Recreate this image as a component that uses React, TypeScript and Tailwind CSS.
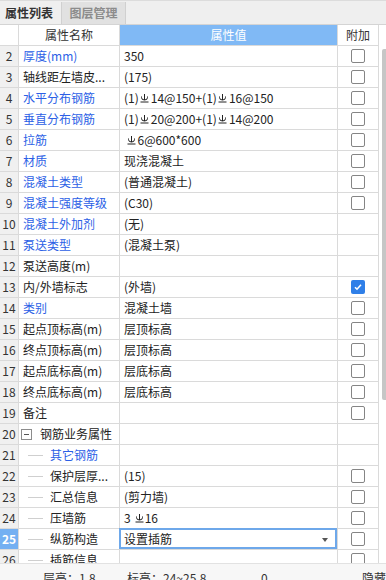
import React from "react";

type Row = {
  n: number;
  name: string;
  blue?: boolean;
  value?: React.ReactNode;
  cb?: "off" | "on";
  tree?: "group" | "child";
  selected?: boolean;
};

// HRB400 rebar grade symbol
function R({ className = "mx-[1.5px]" }: { className?: string }) {
  return (
    <svg
      width="9"
      height="9"
      viewBox="0 0 9 9"
      className={"inline-block align-[1px] " + className}
      fill="none"
      stroke="currentColor"
      strokeWidth="1"
    >
      <path d="M4.5 0V6" />
      <path d="M1.5 2.5v1a3 2.5 0 0 0 6 0v-1" />
      <path d="M0.5 8h8" />
    </svg>
  );
}

const rows: Row[] = [
  { n: 2, name: "厚度(mm)", blue: true, value: "350", cb: "off" },
  { n: 3, name: "轴线距左墙皮...", value: "(175)", cb: "off" },
  {
    n: 4,
    name: "水平分布钢筋",
    blue: true,
    value: (
      <>
        (1)<R />14@150+(1)<R />16@150
      </>
    ),
    cb: "off",
  },
  {
    n: 5,
    name: "垂直分布钢筋",
    blue: true,
    value: (
      <>
        (1)<R />20@200+(1)<R />14@200
      </>
    ),
    cb: "off",
  },
  {
    n: 6,
    name: "拉筋",
    blue: true,
    value: (
      <>
        <R className="ml-[3px] mr-[1.5px]" />6@600*600
      </>
    ),
    cb: "off",
  },
  { n: 7, name: "材质", blue: true, value: "现浇混凝土", cb: "off" },
  { n: 8, name: "混凝土类型", blue: true, value: "(普通混凝土)", cb: "off" },
  { n: 9, name: "混凝土强度等级", blue: true, value: "(C30)", cb: "off" },
  { n: 10, name: "混凝土外加剂", blue: true, value: "(无)" },
  { n: 11, name: "泵送类型", blue: true, value: "(混凝土泵)" },
  { n: 12, name: "泵送高度(m)" },
  { n: 13, name: "内/外墙标志", value: "(外墙)", cb: "on" },
  { n: 14, name: "类别", blue: true, value: "混凝土墙", cb: "off" },
  { n: 15, name: "起点顶标高(m)", value: "层顶标高", cb: "off" },
  { n: 16, name: "终点顶标高(m)", value: "层顶标高", cb: "off" },
  { n: 17, name: "起点底标高(m)", value: "层底标高", cb: "off" },
  { n: 18, name: "终点底标高(m)", value: "层底标高", cb: "off" },
  { n: 19, name: "备注", cb: "off" },
  { n: 20, name: "钢筋业务属性", tree: "group" },
  { n: 21, name: "其它钢筋", blue: true, tree: "child" },
  { n: 22, name: "保护层厚...", value: "(15)", tree: "child", cb: "off" },
  { n: 23, name: "汇总信息", value: "(剪力墙)", tree: "child", cb: "off" },
  {
    n: 24,
    name: "压墙筋",
    value: (
      <>
        3<R className="ml-[4px] mr-[1px]" />16
      </>
    ),
    tree: "child",
    cb: "off",
  },
  { n: 25, name: "纵筋构造", value: "设置插筋", tree: "child", cb: "off", selected: true },
  { n: 26, name: "插筋信息", tree: "child", cb: "off" },
];

function Check({ on }: { on?: boolean }) {
  if (on) {
    return (
      <div className="w-[14px] h-[14px] rounded-[2px] bg-[#2f7fe8] flex items-center justify-center">
        <svg width="10" height="10" viewBox="0 0 10 10" fill="none" stroke="white" strokeWidth="1.6">
          <path d="M2 5.2l2 2 4-4.4" />
        </svg>
      </div>
    );
  }
  return <div className="w-[14px] h-[14px] rounded-[2px] border border-[#858585] bg-white" />;
}

function TableRow({ r }: { r: Row }) {
  return (
    <div className="grid grid-cols-[19px_101px_218px_41px] h-[21px]">
      <div
        className={
          "flex items-center justify-center border-r border-b border-[#dadada] " +
          (r.selected ? "bg-[#74b0f2] text-white font-bold" : "bg-[#f0f0f0] text-[#333]")
        }
      >
        {r.n}
      </div>
      <div className="flex items-center border-r border-b border-[#dadada] whitespace-nowrap overflow-hidden">
        {r.tree === "group" && (
          <div className="ml-[2px] mr-[8px] w-[11px] h-[11px] border border-[#8c8c8c] flex items-center justify-center">
            <div className="w-[5px] h-px bg-[#555]" />
          </div>
        )}
        {r.tree === "child" && <div className="ml-[9px] mr-[7px] w-[15px] h-px bg-[#cfcfcf]" />}
        <span className={(r.tree ? "" : "pl-[4px] ") + (r.blue ? "text-[#2c5fe6]" : "text-[#222]")}>{r.name}</span>
      </div>
      <div className="relative flex items-center pl-[4px] border-r border-b border-[#dadada] whitespace-nowrap text-[#222]">
        {r.value}
        {r.selected && (
          <>
            <div className="absolute -left-px -top-px bottom-0 right-0 border-2 border-[#6ea8ea]" />
            <svg width="6" height="4" viewBox="0 0 6 4" className="absolute left-[202px] top-[9px]">
              <path d="M0 0h6L3 4z" fill="#555" />
            </svg>
          </>
        )}
      </div>
      <div className="flex items-center justify-center border-r border-b border-[#dadada]">
        {r.cb && <Check on={r.cb === "on"} />}
      </div>
    </div>
  );
}

export default function App() {
  return (
    <div className="h-[580px] w-[386px] overflow-hidden bg-white flex flex-col text-[12px] leading-[16px] font-['Noto_Sans_CJK_SC','Liberation_Sans',sans-serif]">
      {/* Tabs */}
      <div className="h-[25px] shrink-0 flex bg-[#efefef] border-t border-[#dcdcdc] border-b border-b-[#d4d4d4]">
        <div className="w-[61px] flex items-center pl-[5px] font-bold text-[#333]">属性列表</div>
        <div className="w-[65px] mt-[1px] flex items-center justify-center font-bold text-[#8c8c8c] bg-[#e1e1e1] border-x border-[#d0d0d0]">
          图层管理
        </div>
      </div>

      {/* Grid */}
      <div className="h-[538px] shrink-0 flex overflow-hidden">
        <div className="w-[379px] shrink-0">
          <div className="grid grid-cols-[19px_101px_218px_41px] h-[21px] bg-white text-[#333]">
            <div className="border-r border-b border-[#dadada]" />
            <div className="flex items-center justify-center border-r border-b border-[#dadada]">属性名称</div>
            <div className="flex items-center justify-center bg-[#80b9f5] text-white border-r border-b border-[#dadada]">
              属性值
            </div>
            <div className="flex items-center justify-center border-r border-b border-[#dadada]">附加</div>
          </div>
          {rows.map((r) => (
            <TableRow key={r.n} r={r} />
          ))}
        </div>
        <div className="w-[7px] shrink-0 bg-white pt-[24px]">
          <div className="ml-[3px] h-[351px] bg-[#c6c6c6] rounded-l-[2px]" />
        </div>
      </div>

      {/* Status bar */}
      <div className="h-[30px] shrink-0 flex bg-[#f7f7f7] border-t border-[#e2e2e2] pt-[6px] text-[#333] whitespace-nowrap">
        <span className="pl-[43px] w-[127px]">层高：1.8</span>
        <span className="w-[134px]">标高：24~25.8</span>
        <span className="w-[101px]">0</span>
        <span>隐藏</span>
      </div>
    </div>
  );
}
